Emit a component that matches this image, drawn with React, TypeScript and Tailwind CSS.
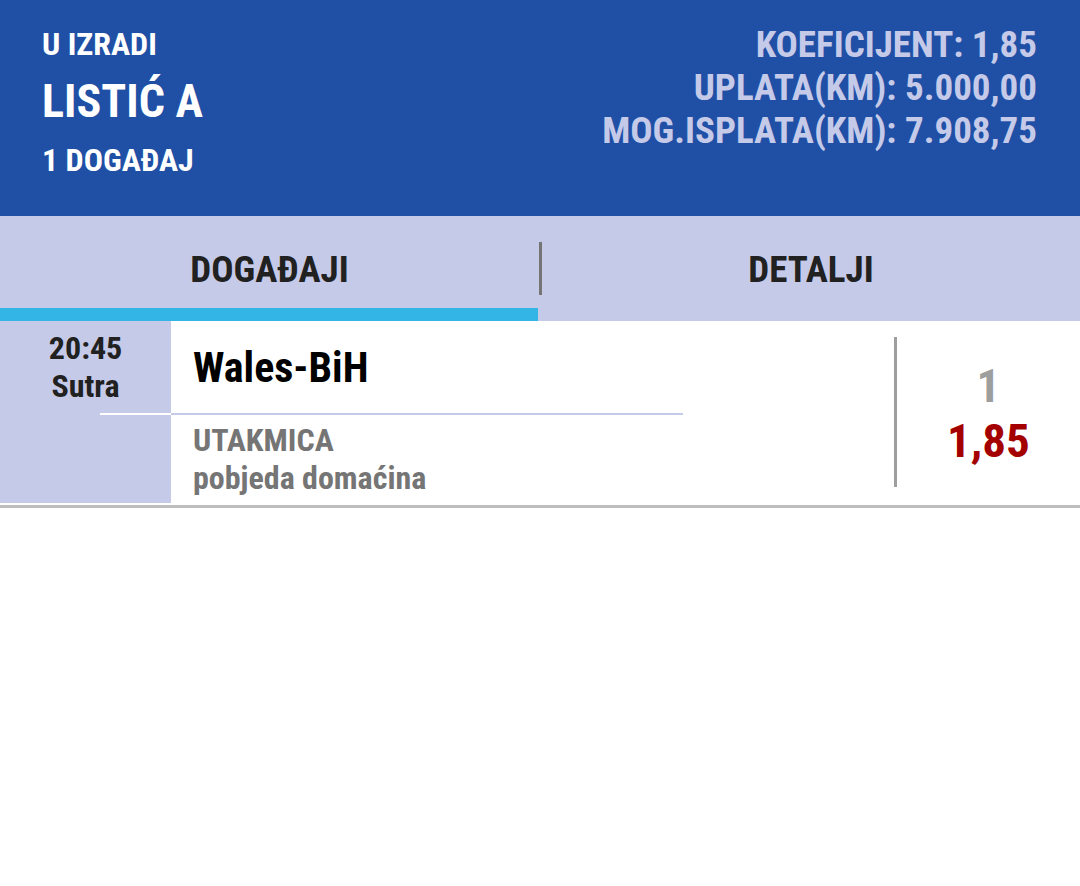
export default function App() {
  return (
    <div className="w-[1080px] h-[886px] bg-white [font-family:'Roboto_Condensed',Roboto,sans-serif] font-bold">
      {/* header */}
      <div className="h-[216px] bg-[#2050a6] flex justify-between pl-[42px] pr-[43px]">
        <div className="flex flex-col text-white pt-[24px]">
          <div className="text-[32px] leading-[40px]">U IZRADI</div>
          <div className="text-[46px] leading-[58px] mt-[8px]">LISTIĆ A</div>
          <div className="text-[32px] leading-[40px] mt-[10px]">1 DOGAĐAJ</div>
        </div>
        <div className="flex flex-col items-end text-[#c5cae9] text-[37px] leading-[43px] pt-[23px]">
          <div>KOEFICIJENT: 1,85</div>
          <div>UPLATA(KM): 5.000,00</div>
          <div>MOG.ISPLATA(KM): 7.908,75</div>
        </div>
      </div>

      {/* tabs */}
      <div className="h-[105px] bg-[#c5cae9] flex text-[#212121] text-[37px]">
        <div className="w-[539px] flex flex-col">
          <div className="flex-1 flex items-center justify-center pt-[16px]">DOGAĐAJI</div>
          <div className="h-[13px] bg-[#33b5e5] w-[538px]" />
        </div>
        <div className="w-[3px] h-[53px] mt-[26px] bg-[#757575]" />
        <div className="flex-1 flex items-center justify-center pt-[3px]">DETALJI</div>
      </div>

      {/* event row */}
      <div className="flex h-[187px] pb-[2px] border-b-[3px] border-[#bdbdbd]">
        <div className="w-[171px] bg-[#c5cae9] flex flex-col">
          <div className="h-[92px] flex flex-col items-center pt-[8px] text-[32px] leading-[38px] text-[#212121]">
            <div>20:45</div>
            <div>Sutra</div>
          </div>
          <div className="h-[2px] ml-[100px] bg-white" />
        </div>
        <div className="w-[723px] flex flex-col">
          <div className="h-[92px] flex items-center pl-[22px] text-[42px] text-black">Wales-BiH</div>
          <div className="h-[2px] w-[512px] bg-[#c5cae9]" />
          <div className="pl-[22px] pt-[6px] text-[32px] leading-[38px] text-[#757575]">
            <div>UTAKMICA</div>
            <div>pobjeda domaćina</div>
          </div>
        </div>
        <div className="flex-1 flex pt-[16px]">
          <div className="w-[3px] h-[150px] bg-[#9e9e9e]" />
          <div className="flex-1 flex flex-col items-center pt-[21px] text-[47px] leading-[55px]">
            <div className="text-[#9e9e9e]">1</div>
            <div className="text-[#a50000]">1,85</div>
          </div>
        </div>
      </div>
    </div>
  );
}
